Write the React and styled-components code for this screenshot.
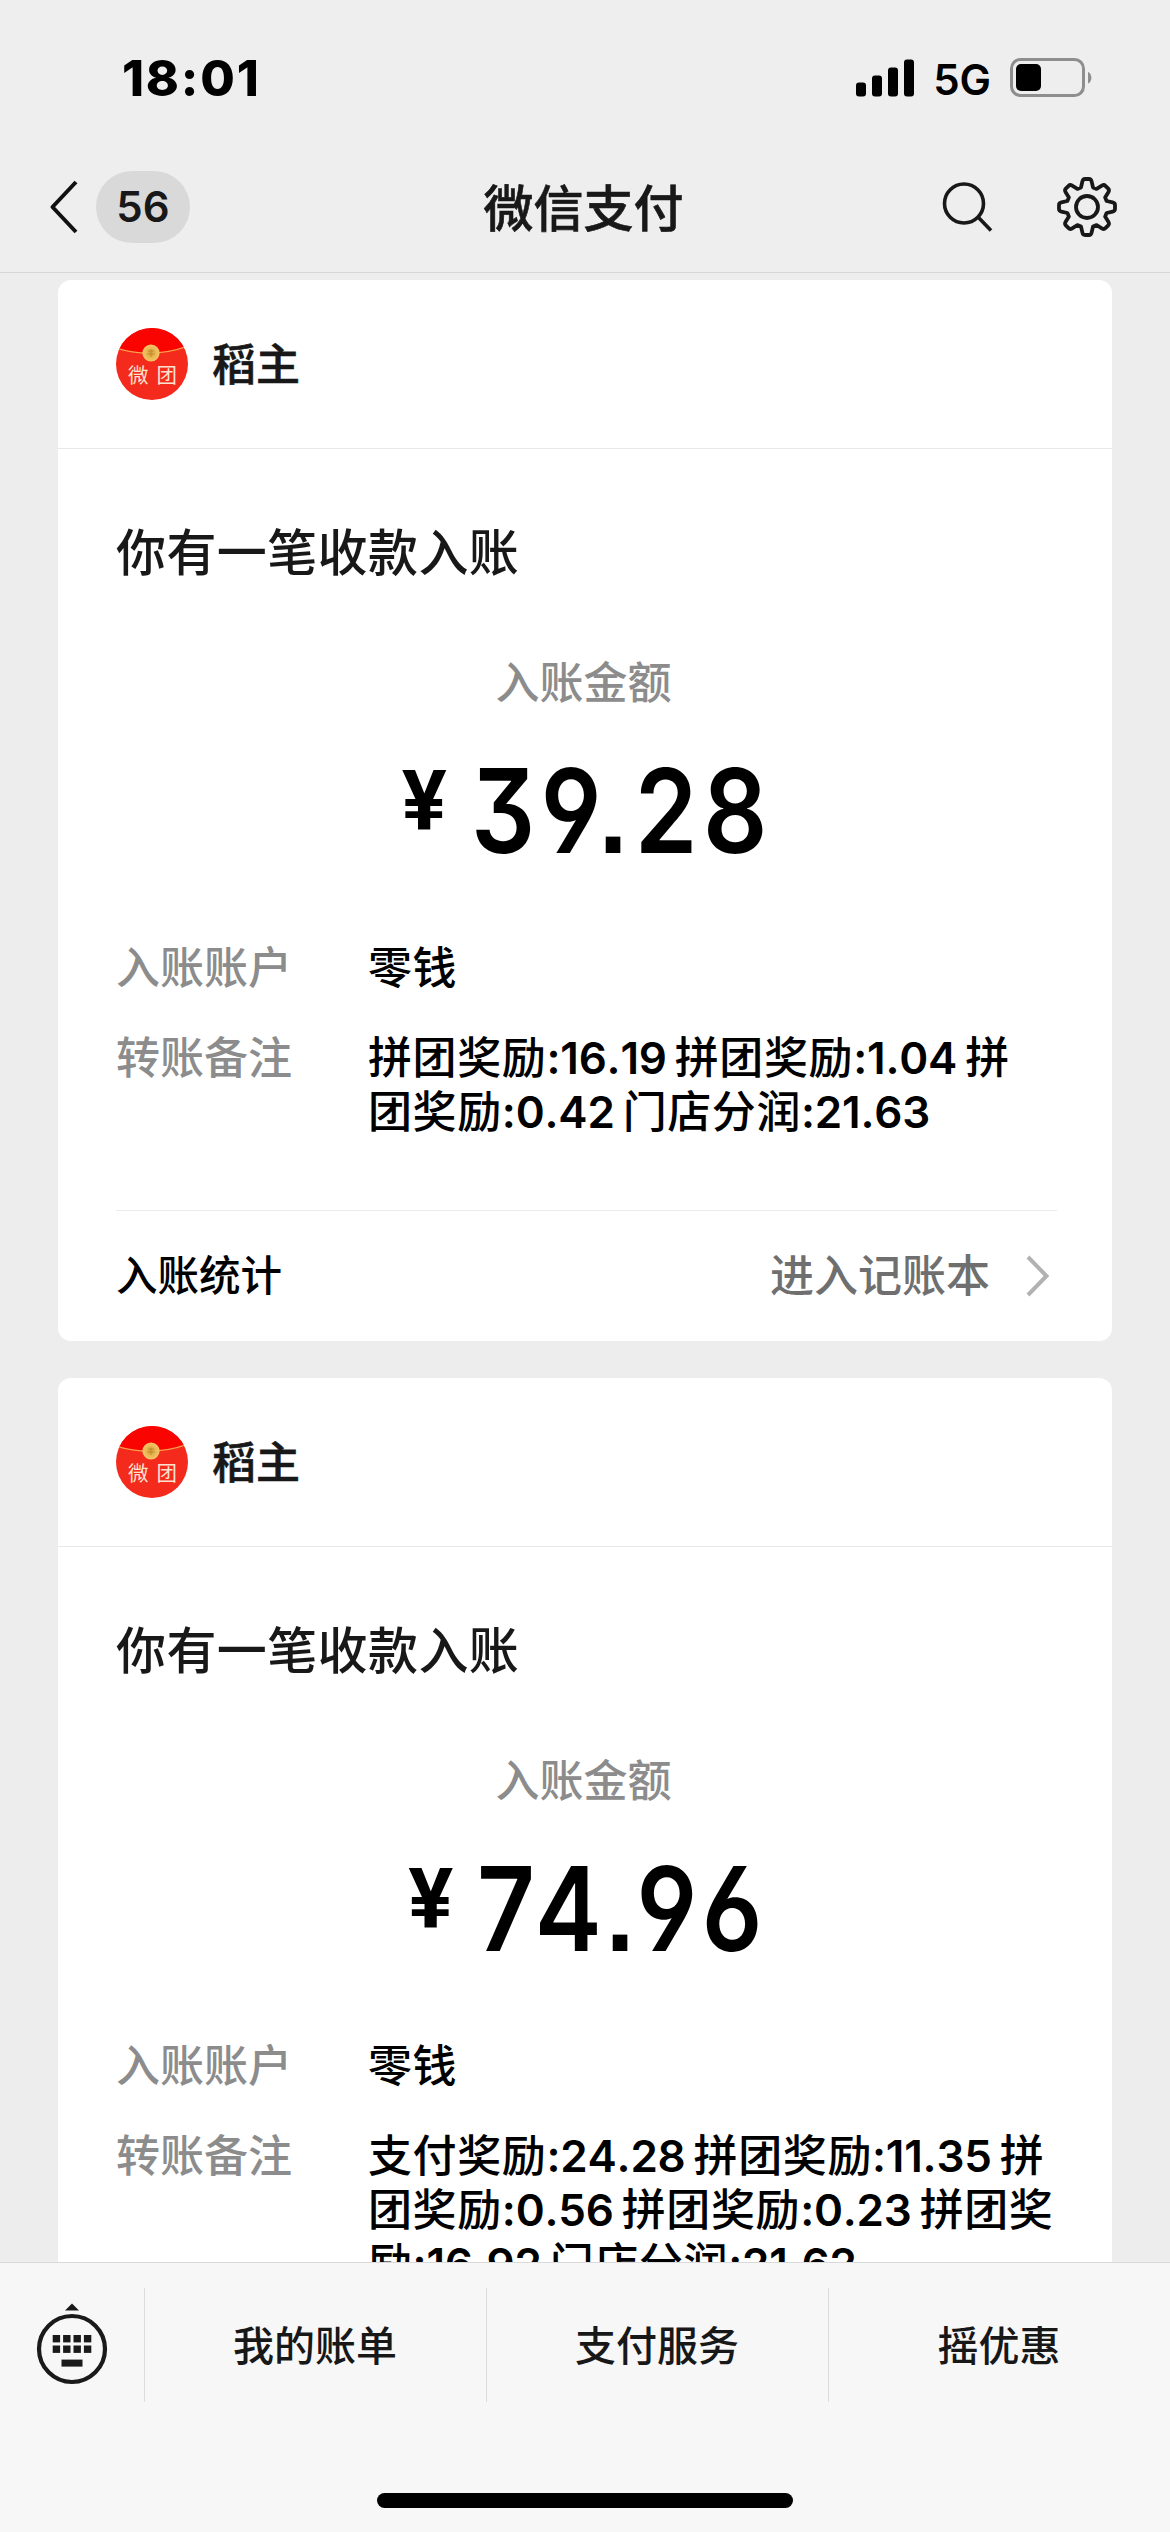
import React from 'react';
import styled, { createGlobalStyle } from 'styled-components';

const BILLS = [
  {
    id: 1,
    amount: '39.28',
    remarks: ['拼团奖励:16.19拼团奖励:1.04拼', '团奖励:0.42门店分润:21.63'],
  },
  {
    id: 2,
    amount: '74.96',
    remarks: [
      '支付奖励:24.28拼团奖励:11.35拼',
      '团奖励:0.56拼团奖励:0.23拼团奖',
      '励:16.92门店分润:21.62',
    ],
  },
];

const MENUS = ['我的账单', '支付服务', '摇优惠'];

const SignalIcon = () => (
  <svg width="58" height="38" viewBox="0 0 58 38">
    <rect x="0" y="23.5" width="10" height="14" rx="3" />
    <rect x="16" y="16.5" width="10" height="21" rx="3" />
    <rect x="32" y="8.5" width="10" height="29" rx="3" />
    <rect x="48" y="0.5" width="10" height="37" rx="3" />
  </svg>
);

const BatteryIcon = () => (
  <svg width="83" height="40" viewBox="0 0 83 40">
    <rect x="1.5" y="1.5" width="72" height="36" rx="9" fill="none" stroke="#8e8e8e" strokeWidth="3" />
    <rect x="6" y="6" width="25" height="27" rx="5" />
    <path d="M78 14 C82.5 15.5 82.5 24 78 25.5 Z" fill="#8e8e8e" />
  </svg>
);

const BackIcon = () => (
  <svg width="30" height="54" viewBox="0 0 30 54" fill="none" stroke="#111" strokeWidth="4">
    <path d="M27 2 L3.5 27 L27 52" strokeLinejoin="round" />
  </svg>
);

const SearchIcon = () => (
  <svg width="52" height="52" viewBox="0 0 52 52" fill="none" stroke="#181818" strokeWidth="3.6">
    <circle cx="23" cy="22.5" r="19.5" />
    <path d="M37 36 L50 49.5" />
  </svg>
);

// one tooth of the gear, turned eight times round the centre
const TOOTH = [
  [-6, -19.6],
  [-4.6, -25.6],
  [-4, -28],
  [-2, -28],
  [2, -28],
  [4, -28],
  [4.6, -25.6],
  [6, -19.6],
];

const gearPath = () => {
  let d = '';
  for (let i = 0; i < 8; i++) {
    const a = (i * Math.PI) / 4;
    const p = TOOTH.map(
      ([x, y]) =>
        `${(x * Math.cos(a) - y * Math.sin(a)).toFixed(2)} ${(x * Math.sin(a) + y * Math.cos(a)).toFixed(2)}`,
    );
    d += `${i ? 'L' : 'M'}${p[0]} L${p[1]} Q${p[2]} ${p[3]} L${p[4]} Q${p[5]} ${p[6]} L${p[7]} `;
  }
  return `${d}Z`;
};

const GearIcon = () => (
  <svg width="62" height="62" viewBox="-31 -31 62 62" fill="none" stroke="#181818" strokeWidth="3.8">
    <path d={gearPath()} strokeLinejoin="round" />
    <circle r="11" />
  </svg>
);

const ArrowIcon = () => (
  <svg width="24" height="42" viewBox="0 0 24 42" fill="none" stroke="#b2b2b2" strokeWidth="4">
    <path d="M2 2 L20.5 21 L2 40" />
  </svg>
);

const KeyboardIcon = () => (
  <svg width="72" height="84" viewBox="0 0 72 84" fill="#1a1a1a">
    <path d="M36 1.5 L43 8.5 H29 Z" />
    <circle cx="36" cy="47" r="33" fill="none" stroke="#1a1a1a" strokeWidth="4.2" />
    {[0, 1, 2, 3].map((n) => (
      <g key={n}>
        <rect x={16.7 + n * 10.4} y="33" width="7.4" height="7.4" />
        <rect x={16.7 + n * 10.4} y="43.5" width="7.4" height="7.4" />
      </g>
    ))}
    <rect x="25.5" y="57.6" width="21" height="7" />
  </svg>
);

const ShopLogo = () => (
  <svg width="72" height="72" viewBox="0 0 72 72">
    <defs>
      <clipPath id="logoClip">
        <circle cx="36" cy="36" r="36" />
      </clipPath>
      <radialGradient id="logoCoin">
        <stop offset="0" stopColor="#d9a03c" />
        <stop offset="1" stopColor="#f6c867" />
      </radialGradient>
    </defs>
    <g clipPath="url(#logoClip)">
      <rect width="72" height="72" fill="#f32a1c" />
      <path d="M0 20 Q36 31 72 18 V0 H0 Z" fill="#f90400" />
      <path d="M0 20 Q36 31 72 18" fill="none" stroke="#f7a04a" strokeWidth="1.3" />
    </g>
    <circle cx="35" cy="25" r="8.6" fill="url(#logoCoin)" />
    <path d="M32 23 H38 M31.5 26 H38.5 M35 21.5 V29" stroke="#b98a2c" strokeWidth="0.9" />
    <LogoText x="12" y="55">微</LogoText>
    <LogoText x="40.5" y="55">团</LogoText>
  </svg>
);

const BillCard = ({ amount, remarks }) => {
  return (
    <StCard>
      <StCardHeader>
        <ShopLogo />
        <StShopName>稻主</StShopName>
      </StCardHeader>
      <StCardBody>
        <StCardTitle>你有一笔收款入账</StCardTitle>
        <StAmountLabel>入账金额</StAmountLabel>
        <StAmount>
          <StYen>¥</StYen>
          <StDigits>{amount}</StDigits>
        </StAmount>
        <StDetails>
          <StDetailLabel>入账账户</StDetailLabel>
          <StDetailValue>零钱</StDetailValue>
          <StDetailLabel>转账备注</StDetailLabel>
          <StDetailValue>
            {remarks.map((line) => (
              <StRemark key={line}>
                {line
                  .split(/(:[\d.]+)/)
                  .map((part, i) => (i % 2 ? <StMoney key={i}>{part}</StMoney> : part))}
              </StRemark>
            ))}
          </StDetailValue>
        </StDetails>
        <StCardFooter>
          <StStats>入账统计</StStats>
          <StLedger>
            <StLedgerText>进入记账本</StLedgerText>
            <ArrowIcon />
          </StLedger>
        </StCardFooter>
      </StCardBody>
    </StCard>
  );
};

const App = () => {
  return (
    <>
      <GlobalStyle />
      <StPage>
        <StStatusBar>
          <StTime>18:01</StTime>
          <StStatusRight>
            <SignalIcon />
            <StNetwork>5G</StNetwork>
            <BatteryIcon />
          </StStatusRight>
        </StStatusBar>
        <StNav>
          <StNavSide>
            <BackIcon />
            <StBadge>56</StBadge>
          </StNavSide>
          <StNavTitle>微信支付</StNavTitle>
          <StNavSide $right>
            <SearchIcon />
            <GearIcon />
          </StNavSide>
        </StNav>
        <StMain>
          {BILLS.map(({ id, amount, remarks }) => (
            <BillCard key={id} amount={amount} remarks={remarks} />
          ))}
        </StMain>
        <StBottom>
          <StMenuBar>
            <StKeyboard>
              <KeyboardIcon />
            </StKeyboard>
            {MENUS.map((menu) => (
              <StMenu key={menu}>{menu}</StMenu>
            ))}
          </StMenuBar>
          <StHomeBar />
        </StBottom>
      </StPage>
    </>
  );
};

const GlobalStyle = createGlobalStyle`
  * {
    box-sizing: border-box;
  }

  body {
    margin: 0;
    font-family: Inter, 'Noto Sans CJK SC', sans-serif;
    font-weight: 500;
    color: #000;
  }

  svg {
    display: block;
    flex-shrink: 0;
  }
`;

const StPage = styled.div`
  display: flex;
  flex-direction: column;
  width: 1170px;
  height: 2532px;
  overflow: hidden;
  background: #ededed;
`;

const StStatusBar = styled.div`
  display: flex;
  justify-content: space-between;
  align-items: center;
  height: 142px;
  padding: 14px 77px 0 122px;
  background: #eee;
`;

const StTime = styled.span`
  font-size: 50px;
  font-weight: 800;
  letter-spacing: 1.8px;
`;

const StStatusRight = styled.div`
  display: flex;
  align-items: center;
`;

const StNetwork = styled.span`
  margin: 2px 19px 0 19px;
  font-size: 42px;
  font-weight: 600;
`;

const StNav = styled.header`
  display: flex;
  align-items: center;
  height: 131px;
  padding: 0 52px 0 49px;
  border-bottom: 1px solid #d6d6d6;
  background: #eee;
`;

const StNavSide = styled.div`
  display: flex;
  flex: 1;
  align-items: center;
  justify-content: ${({ $right }) => ($right ? 'flex-end' : 'flex-start')};
  gap: ${({ $right }) => ($right ? '63px' : '17px')};
`;

const StBadge = styled.span`
  width: 94px;
  height: 72px;
  border-radius: 36px;
  background: #d9d9d9;
  color: #181818;
  font-size: 42px;
  font-weight: 600;
  line-height: 72px;
  text-align: center;
`;

const StNavTitle = styled.h1`
  margin: 3px 0 0;
  color: #181818;
  font-size: 50px;
  font-weight: 500;
  line-height: 60px;
  -webkit-text-stroke: 0.6px #181818;
`;

const StMain = styled.main`
  display: flex;
  flex: 1;
  flex-direction: column;
  gap: 37px;
  min-height: 0;
  padding: 7px 58px 0 58px;
  overflow: hidden;
`;

const StCard = styled.section`
  flex-shrink: 0;
  border-radius: 13px;
  background: #fff;
`;

const StCardHeader = styled.div`
  display: flex;
  align-items: center;
  gap: 24px;
  height: 169px;
  padding: 0 58px;
  border-bottom: 1px solid #e8e8e8;
`;

const StShopName = styled.span`
  margin-top: 2px;
  color: #181818;
  font-size: 44px;
  font-weight: 500;
  line-height: 54px;
  -webkit-text-stroke: 0.6px #181818;
`;

const StCardBody = styled.div`
  display: flex;
  flex-direction: column;
  padding: 74px 55px 0 58px;
`;

const StCardTitle = styled.h2`
  margin: 0;
  color: #181818;
  font-size: 50px;
  font-weight: 500;
  letter-spacing: 0.4px;
  line-height: 60px;
`;

const StAmountLabel = styled.span`
  margin: 75px 6px 0 0;
  color: #8c8c8c;
  font-size: 44px;
  line-height: 50px;
  text-align: center;
`;

const StAmount = styled.div`
  display: flex;
  justify-content: center;
  gap: 24px;
  height: 120px;
  margin: 43px 5px 0 0;
  line-height: 120px;
`;

const StYen = styled.span`
  font-family: Roboto, sans-serif;
  font-size: 84px;
  font-weight: 700;
  line-height: 102px;
`;

// digits are condensed, so the unused width is pulled back by the margin
const StDigits = styled.span`
  margin-right: -56px;
  font-size: 117px;
  font-weight: 600;
  font-feature-settings: 'cv03', 'cv04', 'cv09', 'ss07';
  letter-spacing: 6.5px;
  transform: scaleX(0.86);
  transform-origin: left;
`;

const StDetails = styled.div`
  display: grid;
  grid-template-columns: 252px 1fr;
  row-gap: 36px;
  margin-top: 70px;
  font-size: 44px;
  line-height: 54px;
`;

const StDetailLabel = styled.span`
  color: #8c8c8c;
`;

const StDetailValue = styled.div`
  letter-spacing: 0.6px;
`;

const StRemark = styled.div`
  white-space: nowrap;
`;

const StMoney = styled.span`
  margin-right: 8px;
  font-weight: 580;
  font-kerning: none;
  letter-spacing: -0.2px;
`;

const StCardFooter = styled.div`
  display: flex;
  align-items: center;
  justify-content: space-between;
  height: 131px;
  margin-top: 71px;
  padding-right: 7px;
  border-top: 1px solid #ebebeb;
`;

const StStats = styled.span`
  font-size: 41.5px;
  line-height: 54px;
`;

const StLedger = styled.div`
  display: flex;
  align-items: center;
  gap: 36px;
`;

const StLedgerText = styled.span`
  color: #6f6f6f;
  font-size: 44px;
  line-height: 54px;
`;

const StBottom = styled.footer`
  height: 270px;
  border-top: 1px solid #d9d9d9;
  background: #f7f7f7;
`;

const StMenuBar = styled.div`
  display: flex;
  height: 230px;
  padding-top: 25px;
`;

const StKeyboard = styled.div`
  width: 144px;
  padding: 14px 0 0 36px;
`;

const StMenu = styled.button`
  flex: 1;
  height: 114px;
  padding: 3px 1px 0 0;
  border: 0;
  border-left: 1px solid #dcdcdc;
  background: none;
  color: #181818;
  font-family: inherit;
  font-size: 41px;
  font-weight: 500;
  line-height: 111px;
`;

const StHomeBar = styled.div`
  width: 416px;
  height: 15px;
  margin: 0 auto;
  border-radius: 8px;
  background: #000;
`;

const LogoText = styled.text`
  fill: #fde3cf;
  font-size: 20.5px;
  font-weight: 400;
`;

export default App;
